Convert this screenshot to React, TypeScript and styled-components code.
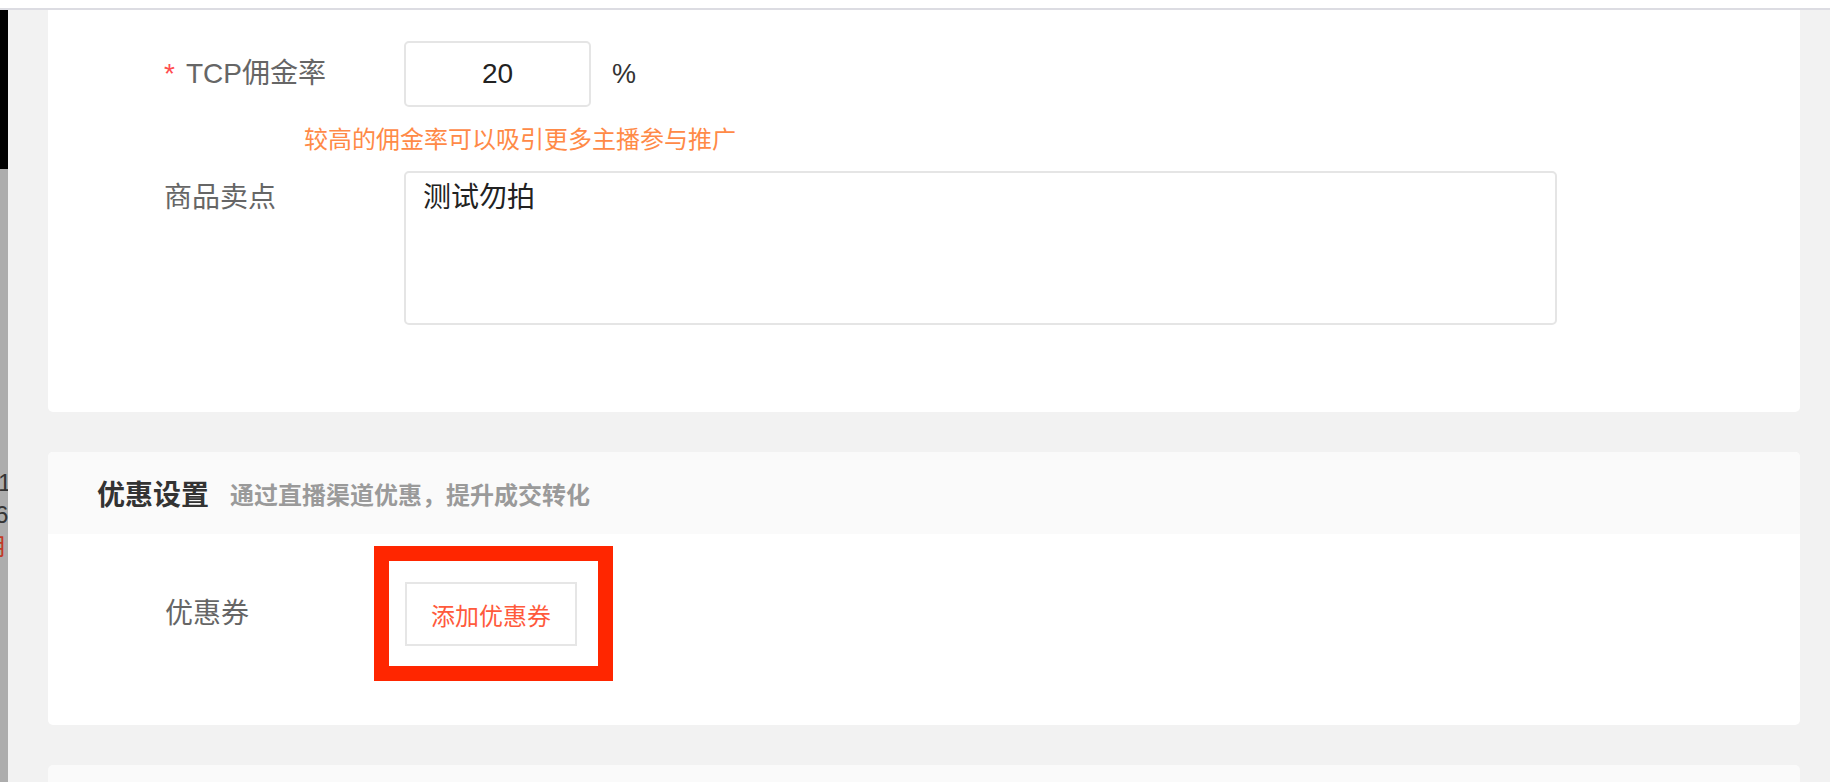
import styled, { createGlobalStyle } from 'styled-components';

const GlobalStyle = createGlobalStyle`
  html, body {
    margin: 0;
    padding: 0;
    background: #f2f2f2;
    font-family: "Liberation Sans", "Noto Sans CJK SC", sans-serif;
    overflow: hidden;
  }
  * {
    box-sizing: border-box;
  }
`;

const StyledPage = styled.div`
  display: flex;
  flex-direction: column;
  height: 782px;
  overflow: hidden;
`;
const StyledTopBar = styled.div`
  height: 10px;
  flex-shrink: 0;
  background: #fff;
  border-bottom: 2px solid #dcdce2;
`;
const StyledBody = styled.div`
  display: flex;
  flex: 1;
  min-height: 0;
`;
const StyledSideStrip = styled.div`
  width: 8px;
  flex-shrink: 0;
  overflow: hidden;
  background: linear-gradient(to bottom, #000 0, #000 159px, #adadad 159px);
  padding-top: 457px;
  font-size: 24px;
  line-height: 32px;
`;
const StyledStripLine = styled.div<{ $shift: number; $red?: boolean }>`
  white-space: nowrap;
  margin-left: ${(p) => -p.$shift}px;
  color: ${(p) => (p.$red ? '#c23a26' : '#353535')};
`;
const StyledMain = styled.div`
  flex: 1;
  display: flex;
  flex-direction: column;
  gap: 40px;
  padding: 0 30px 0 40px;
`;
const StyledCard = styled.div<{ $cutTop?: boolean }>`
  background: #fff;
  border-radius: ${(p) => (p.$cutTop ? '0 0 5px 5px' : '5px')};
  overflow: hidden;
  flex-shrink: 0;
`;
const StyledFormCard = styled(StyledCard)`
  padding: 31px 0 87px 116px;
`;
const StyledRow = styled.div<{ $top?: boolean }>`
  display: flex;
  align-items: ${(p) => (p.$top ? 'flex-start' : 'center')};
`;
const StyledLabel = styled.div<{ $lineHeight?: number }>`
  width: 240px;
  flex-shrink: 0;
  font-size: 28px;
  line-height: ${(p) => p.$lineHeight ?? 40}px;
  color: #666;
`;
const StyledRequired = styled.span`
  color: #ff4d4f;
  margin-right: 11px;
`;
const StyledRateInput = styled.input`
  width: 187px;
  height: 66px;
  border: 2px solid #e5e5e5;
  border-radius: 5px;
  font-family: inherit;
  font-size: 28px;
  color: #222;
  text-align: center;
  outline: none;
  padding: 0;
`;
const StyledUnit = styled.span`
  margin-left: 21px;
  font-size: 27px;
  color: #333;
`;
const StyledHint = styled.div`
  margin: 16px 0 14px 140px;
  font-size: 24px;
  line-height: 34px;
  color: #ff8a47;
`;
const StyledTextarea = styled.textarea`
  width: 1153px;
  height: 154px;
  border: 2px solid #e5e5e5;
  border-radius: 5px;
  padding: 5px 17px;
  font-family: inherit;
  font-size: 28px;
  line-height: 40px;
  color: #222;
  resize: none;
  outline: none;
`;
const StyledCardHead = styled.div`
  height: 82px;
  display: flex;
  align-items: center;
  padding-left: 49px;
  background: #fafafa;
`;
const StyledCardTitle = styled.span`
  font-size: 28px;
  font-weight: 700;
  color: #333;
`;
const StyledCardSub = styled.span`
  margin-left: 21px;
  font-size: 24px;
  font-weight: 700;
  color: #9a9a9a;
`;
const StyledCardBody = styled.div`
  padding: 48px 0 79px 117px;
`;
const StyledButtonWrap = styled.div`
  position: relative;
`;
const StyledAddButton = styled.button`
  width: 172px;
  height: 64px;
  border: 2px solid #e6e6e6;
  background: #fff;
  font-family: inherit;
  font-size: 24px;
  color: #ff5a3c;
  padding: 0;
  cursor: pointer;
`;
const StyledMarker = styled.div`
  position: absolute;
  top: -36px;
  left: -31px;
  right: -36px;
  bottom: -35px;
  border: 15px solid #ff2600;
  pointer-events: none;
`;
const StyledNextCard = styled.div`
  flex: 1;
  min-height: 16px;
  background: #fafafa;
  border-radius: 5px 5px 0 0;
`;

const App = () => {
  return (
    <>
      <GlobalStyle />
      <StyledPage>
        <StyledTopBar />
        <StyledBody>
          <StyledSideStrip>
            <StyledStripLine $shift={2}>10</StyledStripLine>
            <StyledStripLine $shift={5}>6</StyledStripLine>
            <StyledStripLine $shift={18} $red>用</StyledStripLine>
          </StyledSideStrip>
          <StyledMain>
            <StyledFormCard $cutTop>
              <StyledRow>
                <StyledLabel>
                  <StyledRequired>*</StyledRequired>TCP佣金率
                </StyledLabel>
                <StyledRateInput readOnly value="20" />
                <StyledUnit>%</StyledUnit>
              </StyledRow>
              <StyledHint>较高的佣金率可以吸引更多主播参与推广</StyledHint>
              <StyledRow $top>
                <StyledLabel $lineHeight={54}>商品卖点</StyledLabel>
                <StyledTextarea readOnly value="测试勿拍" />
              </StyledRow>
            </StyledFormCard>
            <StyledCard>
              <StyledCardHead>
                <StyledCardTitle>优惠设置</StyledCardTitle>
                <StyledCardSub>通过直播渠道优惠，提升成交转化</StyledCardSub>
              </StyledCardHead>
              <StyledCardBody>
                <StyledRow>
                  <StyledLabel>优惠券</StyledLabel>
                  <StyledButtonWrap>
                    <StyledAddButton>添加优惠券</StyledAddButton>
                    <StyledMarker />
                  </StyledButtonWrap>
                </StyledRow>
              </StyledCardBody>
            </StyledCard>
            <StyledNextCard />
          </StyledMain>
        </StyledBody>
      </StyledPage>
    </>
  );
};

export default App;
